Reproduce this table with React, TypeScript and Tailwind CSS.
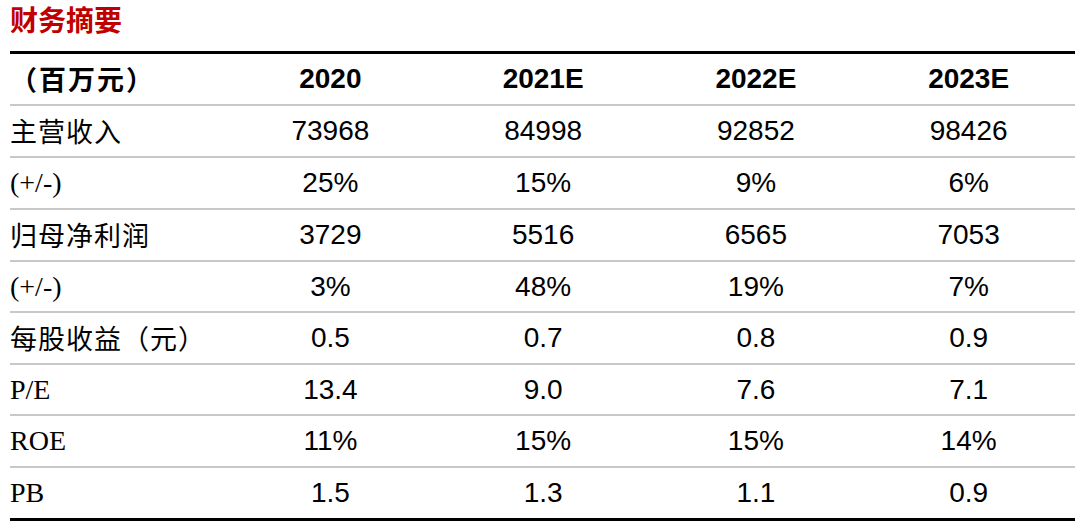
import React from "react";

const cjk = '"Noto Sans CJK SC", sans-serif';
const serif = '"Liberation Serif", "Noto Sans CJK SC", serif';
const sans = '"Liberation Sans", Arial, sans-serif';

type Row = { label: string; latin?: boolean; vals: string[]; h: string };

const rows: Row[] = [
  { label: "主营收入", vals: ["73968", "84998", "92852", "98426"], h: "h-[52px] border-b-2" },
  { label: "(+/-)", latin: true, vals: ["25%", "15%", "9%", "6%"], h: "h-[52px] border-b-2" },
  { label: "归母净利润", vals: ["3729", "5516", "6565", "7053"], h: "h-[52px] border-b-2" },
  { label: "(+/-)", latin: true, vals: ["3%", "48%", "19%", "7%"], h: "h-[51px] border-b-2" },
  { label: "每股收益（元）", vals: ["0.5", "0.7", "0.8", "0.9"], h: "h-[52px] border-b-2" },
  { label: "P/E", latin: true, vals: ["13.4", "9.0", "7.6", "7.1"], h: "h-[51px] border-b-2" },
  { label: "ROE", latin: true, vals: ["11%", "15%", "15%", "14%"], h: "h-[52px] border-b-2" },
  { label: "PB", latin: true, vals: ["1.5", "1.3", "1.1", "0.9"], h: "h-[50px]" },
];

export default function App() {
  return (
    <div className="w-[1080px] h-[528px] bg-white pl-[10px] overflow-hidden">
      <div className="h-[51px] flex items-start pt-[3px]">
        <span
          className="text-[28px] font-bold text-[#c00000] leading-[32px]"
          style={{ fontFamily: cjk }}
        >
          财务摘要
        </span>
      </div>
      <div className="w-[1065px] border-t-[3px] border-b-[3px] border-black">
        <div className="grid grid-cols-[214px_repeat(4,1fr)] h-[52px] border-b-2 border-[#c8c8c8] items-center text-black">
          <div className="text-[27px] font-bold tracking-[2px]" style={{ fontFamily: cjk }}>
            （百万元）
          </div>
          {["2020", "2021E", "2022E", "2023E"].map((y) => (
            <div key={y} className="text-center text-[28px] font-bold" style={{ fontFamily: sans }}>
              {y}
            </div>
          ))}
        </div>
        {rows.map((r, i) => (
          <div
            key={i}
            className={`grid grid-cols-[214px_repeat(4,1fr)] items-center border-[#c8c8c8] text-black ${r.h}`}
          >
            <div
              className={r.latin ? "text-[28px]" : "text-[27px] tracking-[1px]"}
              style={{ fontFamily: r.latin ? serif : cjk }}
            >
              {r.label}
            </div>
            {r.vals.map((v, j) => (
              <div key={j} className="text-center text-[28px]" style={{ fontFamily: sans }}>
                {v}
              </div>
            ))}
          </div>
        ))}
      </div>
    </div>
  );
}
